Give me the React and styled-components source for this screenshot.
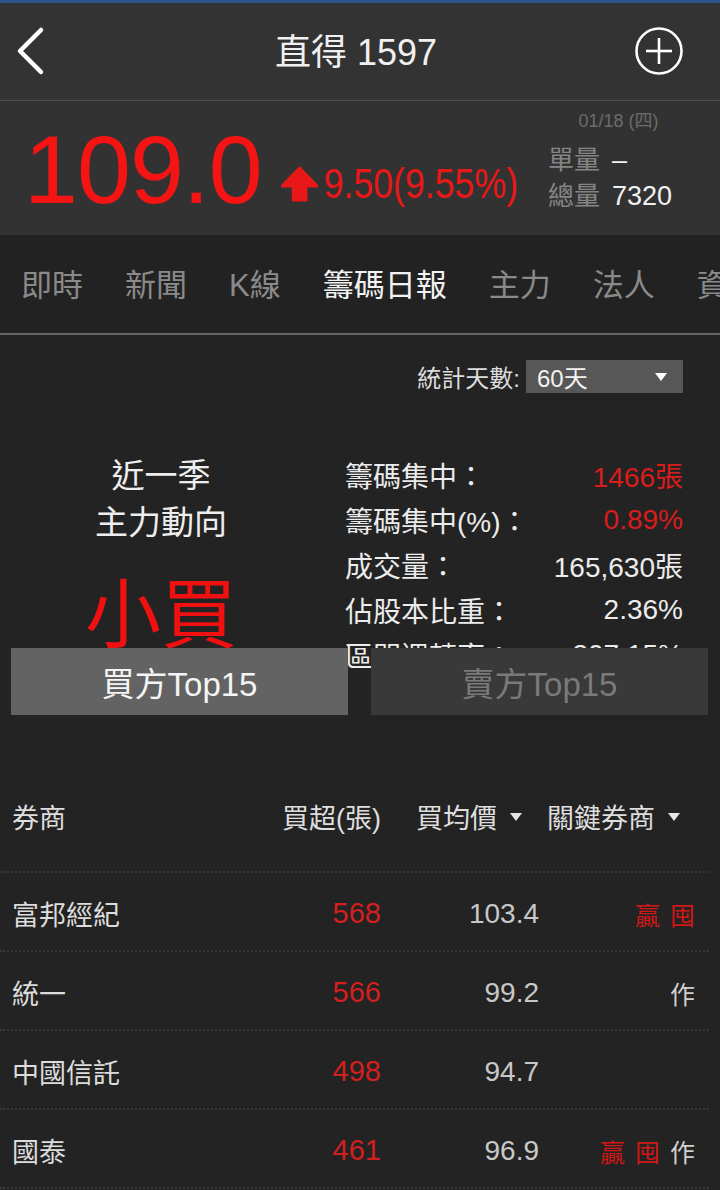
import React from "react";
import styled, { createGlobalStyle } from "styled-components";

const GlobalStyle = createGlobalStyle`
	html, body {
		margin: 0;
		padding: 0;
		background: #232323;
	}
	* {
		box-sizing: border-box;
	}
	body {
		font-family: "Liberation Sans", "Noto Sans CJK TC", sans-serif;
	}
`;

const Page = styled.div`
	width: 720px;
	min-height: 1190px;
	background: #232323;
	color: #e8e8e8;
	overflow: hidden;
`;

const TopBar = styled.header`
	height: 101px;
	display: flex;
	align-items: center;
	justify-content: space-between;
	padding: 0 36px 2px 14px;
	background: #333333;
	border-top: 3px solid #2b548a;
	border-bottom: 1px solid #4c4c4c;
`;

const Title = styled.h1`
	margin: 0 0 4px 14px;
	font-size: 36px;
	font-weight: 400;
	color: #f0f0f0;
`;

const IconButton = styled.button`
	width: 50px;
	height: 50px;
	padding: 0;
	border: none;
	background: transparent;
	display: flex;
	align-items: center;
	justify-content: ${(props) => (props.$start ? "flex-start" : "center")};
`;

const Quote = styled.section`
	height: 134px;
	display: flex;
	align-items: center;
	justify-content: space-between;
	padding: 0 37px 0 24px;
	background: #323232;
`;

const PriceGroup = styled.div`
	flex: 1;
	min-width: 0;
	display: flex;
	align-items: baseline;
	margin-top: 2px;
`;

const Price = styled.span`
	font-size: 97px;
	line-height: 1;
	color: #f51414;
	letter-spacing: -1px;
`;

const Change = styled.span`
	display: inline-flex;
	align-items: center;
	margin-left: 16px;
	font-size: 43px;
	color: #e81818;
	white-space: nowrap;
	transform: scaleX(0.83);
	transform-origin: left center;
	svg {
		margin-right: 3px;
	}
`;

const Info = styled.div`
	flex-shrink: 0;
	display: flex;
	flex-direction: column;
	width: 135px;
	margin-top: -16px;
`;

const DateText = styled.div`
	font-size: 18px;
	color: #6c6c6c;
	text-align: center;
	margin-bottom: 10px;
	padding-left: 6px;
`;

const InfoLine = styled.div`
	display: flex;
	align-items: center;
	gap: 12px;
	font-size: 27px;
	line-height: 36px;
	color: #f0f0f0;
	white-space: nowrap;
`;

const InfoLabel = styled.span`
	color: #858585;
	font-size: 26px;
`;

const Tabs = styled.nav`
	height: 100px;
	display: flex;
	align-items: center;
	gap: 42px;
	padding: 0 0 4px 21px;
	background: #222222;
	border-bottom: 2px solid #666666;
	white-space: nowrap;
	overflow: hidden;
`;

const Tab = styled.span`
	font-size: 31px;
	color: ${(props) => (props.$active ? "#f2f2f2" : "#8a8a8a")};
`;

const Summary = styled.section`
	position: relative;
	height: 427px;
	padding-top: 24px;
`;

const FilterRow = styled.div`
	display: flex;
	justify-content: flex-end;
	align-items: center;
	gap: 6px;
	padding-right: 37px;
`;

const FilterLabel = styled.span`
	font-size: 24px;
	color: #dcdcdc;
`;

const Select = styled.div`
	width: 157px;
	height: 33px;
	display: flex;
	align-items: center;
	justify-content: space-between;
	padding: 0 16px 0 11px;
	background: #575757;
	font-size: 24px;
	color: #f2f2f2;
`;

const Overview = styled.div`
	display: grid;
	grid-template-columns: 322px 1fr;
	gap: 23px;
	padding-right: 37px;
	margin-top: 58px;
`;

const Trend = styled.div`
	display: flex;
	flex-direction: column;
	align-items: center;
	font-size: 33px;
	line-height: 47px;
	color: #eeeeee;
`;

const TrendValue = styled.div`
	margin-top: 30px;
	font-size: 76px;
	line-height: 80px;
	color: #f01010;
`;

const Stats = styled.div`
	display: grid;
	grid-template-columns: 1fr auto;
	grid-auto-rows: 45px;
	align-items: center;
	font-size: 28px;
`;

const StatLabel = styled.span`
	color: #ececec;
	white-space: nowrap;
`;

const StatValue = styled.span`
	text-align: right;
	color: ${(props) => (props.$red ? "#d91c1c" : "#ececec")};
`;

const ToggleBar = styled.div`
	position: absolute;
	top: 313px;
	left: 11px;
	right: 12px;
	height: 67px;
	display: grid;
	grid-template-columns: 1fr 1fr;
	gap: 23px;
`;

const Toggle = styled.button`
	border: none;
	padding: 0;
	font-family: inherit;
	font-size: 33px;
	background: ${(props) => (props.$active ? "#636363" : "#393939")};
	color: ${(props) => (props.$active ? "#f4f4f4" : "#7a7a7a")};
`;

const Table = styled.section`
	padding-bottom: 4px;
`;

const Row = styled.div`
	display: grid;
	grid-template-columns: 1fr 140px 158px 156px;
	align-items: center;
	height: ${(props) => (props.$head ? "111px" : "79px")};
	margin-right: 11px;
	padding: ${(props) => (props.$head ? "0 14px 0 12px" : "4px 14px 0 12px")};
	border-bottom: 2px dotted #383838;
`;

const HeadCell = styled.div`
	display: flex;
	align-items: center;
	justify-content: ${(props) => (props.$left ? "flex-start" : "flex-end")};
	gap: 13px;
	padding-right: ${(props) => props.$pr || 0}px;
	font-size: 27px;
	color: #dedede;
	white-space: nowrap;
`;

const Name = styled.div`
	font-size: 27px;
	color: #dcdcdc;
`;

const Num = styled.div`
	text-align: right;
	font-size: ${(props) => (props.$red ? 29 : 28)}px;
	color: ${(props) => (props.$red ? "#d41f1f" : "#c8c8c8")};
`;

const Tags = styled.div`
	display: flex;
	justify-content: flex-end;
	gap: 10px;
`;

const Tag = styled.span`
	font-size: 25px;
	color: ${(props) => (props.$red ? "#d01818" : "#cfcfcf")};
`;

const BackIcon = () => (
	<svg width="34" height="50" viewBox="0 0 34 50">
		<polyline
			points="27,4 6,25 27,46"
			fill="none"
			stroke="#ffffff"
			strokeWidth="4.5"
			strokeLinecap="round"
			strokeLinejoin="round"
		/>
	</svg>
);

const AddIcon = () => (
	<svg width="50" height="50" viewBox="0 0 50 50">
		<circle cx="25" cy="25" r="22.5" fill="none" stroke="#ffffff" strokeWidth="2.6" />
		<line x1="12" y1="25" x2="38" y2="25" stroke="#ffffff" strokeWidth="2.6" />
		<line x1="25" y1="12" x2="25" y2="38" stroke="#ffffff" strokeWidth="2.6" />
	</svg>
);

const UpArrow = () => (
	<svg width="52" height="38" viewBox="0 0 52 38">
		<path
			d="M26 3 L47 21 L34 21 L34 35 L18 35 L18 21 L5 21 Z"
			fill="#e81818"
			stroke="#e81818"
			strokeWidth="3"
			strokeLinejoin="round"
		/>
	</svg>
);

const Caret = ({ color = "#ffffff" }) => (
	<svg width="12" height="8" viewBox="0 0 12 8">
		<path d="M0 0 L12 0 L6 8 Z" fill={color} />
	</svg>
);

const tabs = ["即時", "新聞", "K線", "籌碼日報", "主力", "法人", "資料"];

const stats = [
	{ label: "籌碼集中：", value: "1466張", red: true },
	{ label: "籌碼集中(%)：", value: "0.89%", red: true },
	{ label: "成交量：", value: "165,630張" },
	{ label: "佔股本比重：", value: "2.36%" },
	{ label: "區間週轉率：", value: "307.15%" },
];

const brokers = [
	{ name: "富邦經紀", buy: "568", avg: "103.4", tags: ["贏", "囤"] },
	{ name: "統一", buy: "566", avg: "99.2", tags: ["作"] },
	{ name: "中國信託", buy: "498", avg: "94.7", tags: [] },
	{ name: "國泰", buy: "461", avg: "96.9", tags: ["贏", "囤", "作"] },
];

export default function App() {
	return (
		<Page>
			<GlobalStyle />
			<TopBar>
				<IconButton $start>
					<BackIcon />
				</IconButton>
				<Title>直得 1597</Title>
				<IconButton>
					<AddIcon />
				</IconButton>
			</TopBar>

			<Quote>
				<PriceGroup>
					<Price>109.0</Price>
					<Change>
						<UpArrow />
						9.50(9.55%)
					</Change>
				</PriceGroup>
				<Info>
					<DateText>01/18 (四)</DateText>
					<InfoLine>
						<InfoLabel>單量</InfoLabel>
						<span>–</span>
					</InfoLine>
					<InfoLine>
						<InfoLabel>總量</InfoLabel>
						<span>7320</span>
					</InfoLine>
				</Info>
			</Quote>

			<Tabs>
				{tabs.map((t) => (
					<Tab key={t} $active={t === "籌碼日報"}>
						{t}
					</Tab>
				))}
			</Tabs>

			<Summary>
				<FilterRow>
					<FilterLabel>統計天數:</FilterLabel>
					<Select>
						<span>60天</span>
						<Caret />
					</Select>
				</FilterRow>

				<Overview>
					<Trend>
						<div>近一季</div>
						<div>主力動向</div>
						<TrendValue>小買</TrendValue>
					</Trend>
					<Stats>
						{stats.map((s) => (
							<React.Fragment key={s.label}>
								<StatLabel>{s.label}</StatLabel>
								<StatValue $red={s.red}>{s.value}</StatValue>
							</React.Fragment>
						))}
					</Stats>
				</Overview>

				<ToggleBar>
					<Toggle $active>買方Top15</Toggle>
					<Toggle>賣方Top15</Toggle>
				</ToggleBar>
			</Summary>

			<Table>
				<Row $head>
					<HeadCell $left>券商</HeadCell>
					<HeadCell>買超(張)</HeadCell>
					<HeadCell $pr={17}>
						買均價
						<Caret color="#e6e6e6" />
					</HeadCell>
					<HeadCell $pr={15}>
						關鍵券商
						<Caret color="#e6e6e6" />
					</HeadCell>
				</Row>
				{brokers.map((b) => (
					<Row key={b.name}>
						<Name>{b.name}</Name>
						<Num $red>{b.buy}</Num>
						<Num>{b.avg}</Num>
						<Tags>
							{b.tags.map((t) => (
								<Tag key={t} $red={t !== "作"}>
									{t}
								</Tag>
							))}
						</Tags>
					</Row>
				))}
			</Table>
		</Page>
	);
}
